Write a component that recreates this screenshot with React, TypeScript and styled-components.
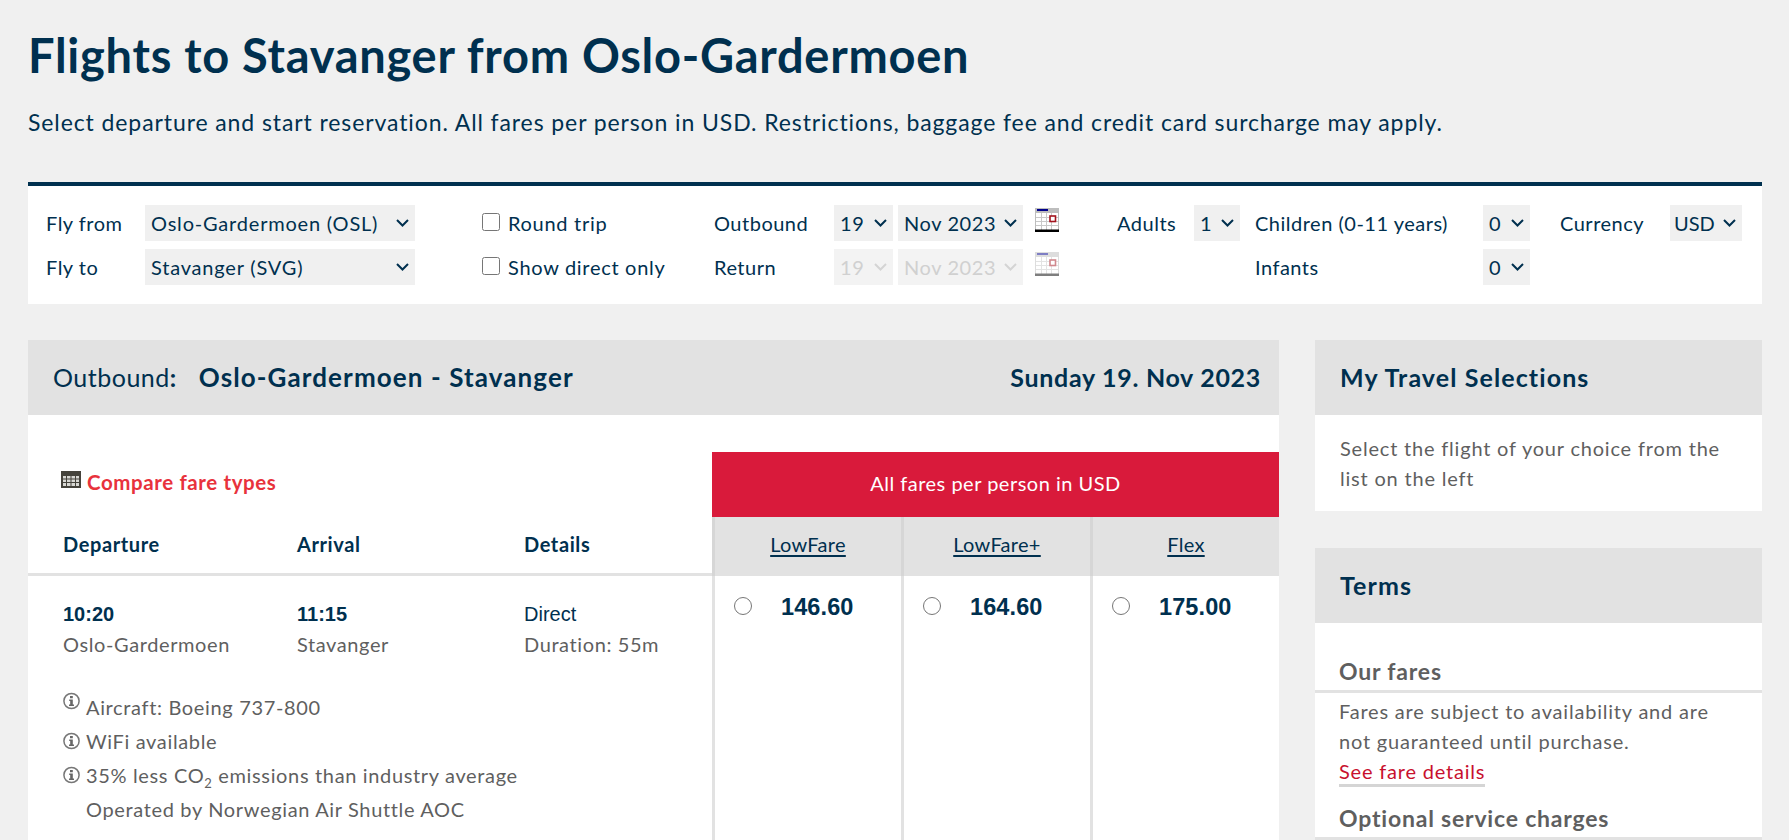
import styled, { createGlobalStyle } from "styled-components"

const navy = "#00304f"
const grey = "#5f5f5f"
const rule = "#e2e2e2"

const chevron = (colour: string) =>
  `url("data:image/svg+xml,%3Csvg xmlns='http://www.w3.org/2000/svg' viewBox='0 0 13 8'%3E%3Cpath d='M1 1l5.500 5.500L12 1' fill='none' stroke='${colour}' stroke-width='2'/%3E%3C/svg%3E")`

const GlobalStyle = createGlobalStyle`
  html, body {
    margin: 0;
    height: 840px;
    overflow: hidden;
    background: #f0f0f0;
  }
  body {
    font-family: "Lato", "Liberation Sans", sans-serif;
    color: ${navy};
  }
`

const Page = styled.div`
  padding: 25px 27px 0 28px;
`

const Title = styled.h1`
  margin: 0;
  font-size: 47px;
  line-height: 60px;
  font-weight: 700;
  letter-spacing: 0.72px;
  color: ${navy};
`

const Intro = styled.p`
  margin: 22px 0 0;
  font-size: 23px;
  line-height: 30px;
  letter-spacing: 0.9px;
`

const SearchBar = styled.form`
  margin-top: 45px;
  height: 122px;
  box-sizing: border-box;
  background: #fff;
  border-top: 4px solid ${navy};
  padding: 19px 0 0 18px;
  display: grid;
  grid-template-columns: 99px 270px 67px 232px 120px 283px 77px 61px 228px 77px 110px 72px;
  grid-template-rows: 36px 36px;
  row-gap: 8px;
  font-size: 20px;
  letter-spacing: 0.5px;
`

const FieldLabel = styled.label`
  display: flex;
  align-items: center;
`

const Check = styled.label`
  display: flex;
  align-items: center;
  gap: 8px;
  letter-spacing: 0.7px;

  input {
    width: 18px;
    height: 18px;
    margin: 0 0 3px;
  }
`

const DateGroup = styled.div`
  display: flex;
  align-items: center;
  gap: 5px;
`

const Select = styled.select<{ $w?: number; $tight?: boolean }>`
  appearance: none;
  width: ${({ $w }) => ($w ? `${$w}px` : "100%")};
  height: 36px;
  border: none;
  border-radius: 0;
  background: #f0f0f0 ${chevron("%2300304f")} no-repeat right 6px center / 13px 8px;
  color: ${navy};
  font-family: inherit;
  font-size: 20px;
  letter-spacing: ${({ $w, $tight }) => ($tight ? "0" : $w ? "0.6px" : "0.8px")};
  padding: 0 ${({ $tight }) => ($tight ? "4px" : "6px")};

  &:disabled {
    color: #d0d0d0;
    background: #f3f3f3 ${chevron("%23d4d4d4")} no-repeat right 6px center / 13px 8px;
    opacity: 1;
  }
`

const CalendarIcon = styled.svg<{ $off?: boolean }>`
  width: 24px;
  height: 24px;
  margin: 0 0 6px 7px;
  opacity: ${({ $off }) => ($off ? 0.5 : 1)};
`

const Columns = styled.div`
  margin-top: 36px;
  display: flex;
  gap: 36px;
  align-items: flex-start;
`

const Main = styled.section`
  width: 1251px;
  flex: none;
`

const Side = styled.aside`
  width: 447px;
  flex: none;
`

const SectionHead = styled.header`
  height: 75px;
  box-sizing: border-box;
  padding: 0 18px 2px 25px;
  background: ${rule};
  display: flex;
  align-items: center;
  justify-content: space-between;
  font-size: 25px;
  letter-spacing: 0.7px;
`

const HeadLead = styled.span`
  font-weight: 400;
  font-size: 25px;
  letter-spacing: 0.5px;
  strong {
    font-weight: 700;
  }
`

const HeadRoute = styled.strong`
  margin-left: 22px;
  font-size: 26px;
  letter-spacing: 1.1px;
`

const HeadDate = styled.strong`
  font-weight: 700;
`

const Results = styled.div`
  background: #fff;
  padding-top: 37px;
  height: 500px;
`

const Row = styled.div`
  display: flex;
`

const LeftHead = styled.div`
  width: 684px;
  height: 124px;
  box-sizing: border-box;
  border-bottom: 3px solid ${rule};
  padding: 18px 0 0 33px;
`

const CompareLink = styled.a`
  display: flex;
  align-items: center;
  gap: 6px;
  font-size: 20.5px;
  line-height: 24px;
  font-weight: 700;
  color: #e8323c;
  letter-spacing: 0.6px;

  svg {
    margin-bottom: 6px;
  }
`

const HeadCols = styled.div`
  display: grid;
  grid-template-columns: 234px 227px 1fr;
  margin: 37px 0 0 2px;
  font-size: 20px;
  line-height: 26px;
  font-weight: 700;
  letter-spacing: 0.6px;
`

const FareHead = styled.div`
  width: 567px;
`

const FareBanner = styled.div`
  height: 65px;
  box-sizing: border-box;
  padding-bottom: 3px;
  background: #d91a3b;
  color: #fff;
  display: flex;
  align-items: center;
  justify-content: center;
  font-size: 20px;
  letter-spacing: 0.5px;
`

const FareTabs = styled.div`
  display: grid;
  grid-template-columns: repeat(3, 189px);
  height: 59px;
`

const FareTab = styled.a`
  background: ${rule};
  border-left: 3px solid #d6d6d6;
  padding-bottom: 6px;
  display: flex;
  align-items: center;
  justify-content: center;
  font-size: 20px;
  letter-spacing: 0.3px;
  color: ${navy};
  text-decoration: underline;
  text-underline-offset: 3px;
`

const FlightInfo = styled.div`
  width: 684px;
  padding: 21px 0 0 35px;
  box-sizing: border-box;
`

const FlightCols = styled.div`
  display: grid;
  grid-template-columns: 234px 227px 1fr;
  font-size: 20px;
  letter-spacing: 0.6px;
  color: ${grey};
`

const Strong = styled.div`
  font-family: "Liberation Sans", sans-serif;
  font-size: 20px;
  line-height: 34px;
  font-weight: 700;
  letter-spacing: 0;
  color: ${navy};
`

const Plain = styled.div`
  font-family: "Liberation Sans", sans-serif;
  font-size: 20px;
  line-height: 34px;
  letter-spacing: 0;
  color: ${navy};
`

const Sub = styled.div`
  line-height: 27px;
`

const Notes = styled.ul`
  list-style: none;
  margin: 32px 0 0;
  padding: 0;
  font-size: 20px;
  line-height: 34px;
  letter-spacing: 0.65px;
  color: ${grey};
`

const Note = styled.li`
  display: flex;
  align-items: center;
  gap: 6px;
  sub {
    font-size: 13px;
    line-height: 0;
  }
`

const NoteText = styled.span<{ $indent?: boolean }>`
  margin-left: ${({ $indent }) => ($indent ? "23px" : "0")};
`

const FareCell = styled.label`
  width: 189px;
  height: 400px;
  box-sizing: border-box;
  border-left: 3px solid ${rule};
  padding: 14px 0 0 19px;
  display: flex;
  align-items: flex-start;
  gap: 29px;
  font-family: "Liberation Sans", sans-serif;
  font-size: 23.5px;
  line-height: 34px;
  font-weight: 700;
  letter-spacing: 0.1px;
  color: ${navy};

  input {
    width: 18px;
    height: 18px;
    margin: 7px 0 0;
  }
`

const SideCard = styled.div`
  background: #fff;
  padding: 18px 25px 18px;
  font-size: 20px;
  line-height: 30px;
  letter-spacing: 0.8px;
  color: ${grey};
`

const SideHeadTitle = styled.strong`
  font-weight: 700;
  font-size: 25px;
  letter-spacing: 1.1px;
`

const Spaced = styled.div`
  margin-top: 37px;
`

const TermsBody = styled.div`
  background: #fff;
  padding-top: 33px;
  color: ${grey};
  font-size: 20px;
  letter-spacing: 0.8px;
`

const TermTitle = styled.h3`
  margin: 0;
  padding-left: 24px;
  height: 34px;
  font-size: 23px;
  line-height: 30px;
  font-weight: 700;
  letter-spacing: 0.8px;
  border-bottom: 3px solid ${rule};
  color: ${grey};
`

const TermText = styled.p`
  margin: 3px 0 0;
  padding: 0 30px 0 24px;
  line-height: 30px;
`

const TermLink = styled.a`
  display: inline-block;
  line-height: 26px;
  color: #c8102e;
  border-bottom: 3px solid #d5d5d5;
  margin-bottom: 16px;
`

const Calendar = ({ off }: { off?: boolean }) => (
  <CalendarIcon $off={off} viewBox="0 0 24 24">
    <rect width="24" height="24" fill="#bdbdbd" />
    <rect x="1" y="5" width="22" height="17" fill="#fff" />
    <path d="M2 1h11v2H2z" fill="#00008b" />
    <path
      d="M6.500 5v17M11.500 5v17M16.500 5v17M1 9.500h22M1 13.500h22M1 17.500h22"
      stroke="#c9c9c9"
      strokeWidth="1"
    />
    <rect x="15" y="8" width="5.500" height="5.500" fill="#fff" stroke="#a3141e" strokeWidth="1.600" />
    <rect y="21.500" width="24" height="2.500" fill="#000" />
  </CalendarIcon>
)

const GridIcon = () => (
  <svg width="20" height="17" viewBox="0 0 20 17">
    <rect width="20" height="17" fill="#45433c" />
    <path
      d="M2 5h3v2.500H2zM6 5h3.500v2.500H6zM10.500 5H14v2.500h-3.500zM15 5h3v2.500h-3zM2 8.500h3V11H2zM6 8.500h3.500V11H6zM10.500 8.500H14V11h-3.500zM15 8.500h3V11h-3zM2 12h3v3H2zM6 12h3.500v3H6zM10.500 12H14v3h-3.500zM15 12h3v3h-3z"
      fill="#d8d8d4"
    />
  </svg>
)

const InfoIcon = ({ raised }: { raised?: boolean }) => (
  <svg
    width="17"
    height="18"
    viewBox="0 0 17 18"
    style={raised ? { marginTop: -12 } : undefined}
  >
    <circle cx="8.500" cy="9" r="7.600" fill="none" stroke="#777" strokeWidth="1.500" />
    <path d="M7 4h2.800v2.200H7zM6.200 7.500h3.600v5h1.200v1.500H6v-1.500h1.200V9H6.200z" fill="#666" />
  </svg>
)

const App = () => (
  <>
    <GlobalStyle />
    <Page>
      <Title>Flights to Stavanger from Oslo-Gardermoen</Title>
      <Intro>
        Select departure and start reservation. All fares per person in USD. Restrictions, baggage
        fee and credit card surcharge may apply.
      </Intro>

      <SearchBar>
        <FieldLabel>Fly from</FieldLabel>
        <Select defaultValue="OSL">
          <option value="OSL">Oslo-Gardermoen (OSL)</option>
        </Select>
        <span />
        <Check>
          <input type="checkbox" />
          Round trip
        </Check>
        <FieldLabel>Outbound</FieldLabel>
        <DateGroup>
          <Select $w={59}>
            <option>19</option>
          </Select>
          <Select $w={125}>
            <option>Nov 2023</option>
          </Select>
          <Calendar />
        </DateGroup>
        <FieldLabel>Adults</FieldLabel>
        <Select $w={46}>
          <option>1</option>
        </Select>
        <FieldLabel>Children (0-11 years)</FieldLabel>
        <Select $w={47}>
          <option>0</option>
        </Select>
        <FieldLabel>Currency</FieldLabel>
        <Select $w={72} $tight>
          <option>USD</option>
        </Select>

        <FieldLabel>Fly to</FieldLabel>
        <Select>
          <option>Stavanger (SVG)</option>
        </Select>
        <span />
        <Check>
          <input type="checkbox" />
          Show direct only
        </Check>
        <FieldLabel>Return</FieldLabel>
        <DateGroup>
          <Select $w={59} disabled>
            <option>19</option>
          </Select>
          <Select $w={125} disabled>
            <option>Nov 2023</option>
          </Select>
          <Calendar off />
        </DateGroup>
        <span />
        <span />
        <FieldLabel>Infants</FieldLabel>
        <Select $w={47}>
          <option>0</option>
        </Select>
      </SearchBar>

      <Columns>
        <Main>
          <SectionHead>
            <HeadLead>
              Outbound<strong>:</strong>
              <HeadRoute>Oslo-Gardermoen - Stavanger</HeadRoute>
            </HeadLead>
            <HeadDate>Sunday 19. Nov 2023</HeadDate>
          </SectionHead>
          <Results>
            <Row>
              <LeftHead>
                <CompareLink>
                  <GridIcon />
                  Compare fare types
                </CompareLink>
                <HeadCols>
                  <span>Departure</span>
                  <span>Arrival</span>
                  <span>Details</span>
                </HeadCols>
              </LeftHead>
              <FareHead>
                <FareBanner>All fares per person in USD</FareBanner>
                <FareTabs>
                  <FareTab>LowFare</FareTab>
                  <FareTab>LowFare+</FareTab>
                  <FareTab>Flex</FareTab>
                </FareTabs>
              </FareHead>
            </Row>
            <Row>
              <FlightInfo>
                <FlightCols>
                  <div>
                    <Strong>10:20</Strong>
                    <Sub>Oslo-Gardermoen</Sub>
                  </div>
                  <div>
                    <Strong>11:15</Strong>
                    <Sub>Stavanger</Sub>
                  </div>
                  <div>
                    <Plain>Direct</Plain>
                    <Sub>Duration: 55m</Sub>
                  </div>
                </FlightCols>
                <Notes>
                  <Note>
                    <InfoIcon raised />
                    <span>Aircraft: Boeing 737-800</span>
                  </Note>
                  <Note>
                    <InfoIcon />
                    <span>WiFi available</span>
                  </Note>
                  <Note>
                    <InfoIcon />
                    <span>
                      35% less CO<sub>2</sub> emissions than industry average
                    </span>
                  </Note>
                  <Note>
                    <NoteText $indent>Operated by Norwegian Air Shuttle AOC</NoteText>
                  </Note>
                </Notes>
              </FlightInfo>
              <FareCell>
                <input type="radio" name="fare" />
                146.60
              </FareCell>
              <FareCell>
                <input type="radio" name="fare" />
                164.60
              </FareCell>
              <FareCell>
                <input type="radio" name="fare" />
                175.00
              </FareCell>
            </Row>
          </Results>
        </Main>

        <Side>
          <SectionHead>
            <SideHeadTitle>My Travel Selections</SideHeadTitle>
          </SectionHead>
          <SideCard>Select the flight of your choice from the list on the left</SideCard>
          <Spaced>
            <SectionHead>
              <SideHeadTitle>Terms</SideHeadTitle>
            </SectionHead>
            <TermsBody>
              <TermTitle>Our fares</TermTitle>
              <TermText>
                Fares are subject to availability and are not guaranteed until purchase.
                <br />
                <TermLink>See fare details</TermLink>
              </TermText>
              <TermTitle>Optional service charges</TermTitle>
            </TermsBody>
          </Spaced>
        </Side>
      </Columns>
    </Page>
  </>
)

export default App
